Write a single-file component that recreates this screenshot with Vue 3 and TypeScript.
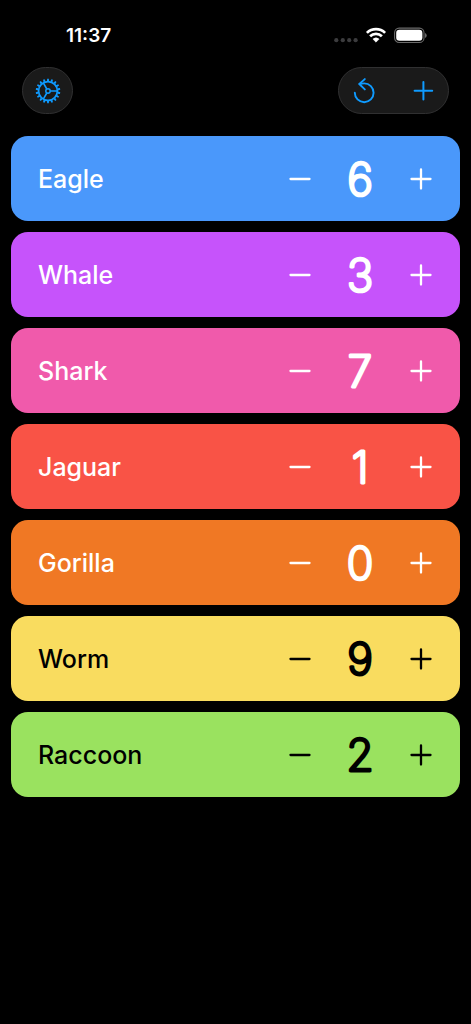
<script setup lang="ts">
import { ref } from 'vue'

interface Player {
  name: string
  score: number
  tone: string
}

const players = ref<Player[]>([
  { name: 'Eagle', score: 6, tone: 'blue' },
  { name: 'Whale', score: 3, tone: 'purple' },
  { name: 'Shark', score: 7, tone: 'pink' },
  { name: 'Jaguar', score: 1, tone: 'red' },
  { name: 'Gorilla', score: 0, tone: 'orange' },
  { name: 'Worm', score: 9, tone: 'yellow' },
  { name: 'Raccoon', score: 2, tone: 'green' },
])

const tones = ['blue', 'purple', 'pink', 'red', 'orange', 'yellow', 'green']
const teeth = Array.from({ length: 18 }, (_, i) => i * 20)

function resetScores() {
  players.value.forEach((p) => (p.score = 0))
}

function addPlayer() {
  const n = players.value.length
  players.value.push({ name: `Player ${n + 1}`, score: 0, tone: tones[n % tones.length] })
}
</script>

<template>
  <div class="screen">
    <div class="status">
      <span class="time">11:37</span>
      <div class="indicators">
        <svg class="dots" width="24" height="16" viewBox="0 0 24 16" aria-hidden="true">
          <circle cx="2.3" cy="12.2" r="2.1" />
          <circle cx="8.8" cy="12.2" r="2.1" />
          <circle cx="15.2" cy="12.2" r="2.1" />
          <circle cx="21.6" cy="12.2" r="2.1" />
        </svg>
        <svg width="20" height="16" viewBox="0 0 20 16" aria-hidden="true">
          <g fill="none" stroke="#fff" stroke-width="2.7">
            <path d="M0.9 4.9A13 13 0 0 1 19.1 4.9" />
            <path d="M4.1 8.3A8.4 8.4 0 0 1 15.9 8.3" />
          </g>
          <path d="M10 14.2L6.9 11.1A4.7 4.7 0 0 1 13.1 11.1Z" fill="#fff" stroke="#fff" stroke-width="0.5" stroke-linejoin="round" />
        </svg>
        <svg width="33" height="16" viewBox="0 0 33 16" aria-hidden="true">
          <rect x="0.6" y="0.1" width="29.4" height="14.4" rx="4.6" fill="none" stroke="#6b6b6b" stroke-width="1.1" />
          <rect x="2.2" y="1.8" width="26.2" height="11" rx="3.2" fill="#fff" />
          <path d="M31.1 4.9Q32.6 5.7 32.6 7.4T31.1 9.9Z" fill="#777" />
        </svg>
      </div>
    </div>

    <header class="toolbar">
      <button class="pill" type="button" aria-label="Settings">
        <svg width="26" height="26" viewBox="-13 -13 26 26" fill="none" stroke="currentColor">
          <circle r="9.4" stroke-width="1.7" />
          <path
            v-for="a in teeth"
            :key="a"
            d="M-1.1 -9.8L-0.8 -12.3H0.8L1.1 -9.8Z"
            :transform="`rotate(${a})`"
            fill="currentColor"
            stroke="none"
          />
          <circle r="2.2" stroke-width="1.5" />
          <path d="M2.4 0H9.4M-1.2 -2L-4.7 -8.1M-1.2 2L-4.7 8.1" stroke-width="1.6" />
        </svg>
      </button>
      <div class="pill group">
        <button type="button" aria-label="Reset scores" @click="resetScores">
          <svg width="26" height="26" viewBox="0 0 26 26" fill="none" stroke="currentColor" stroke-width="1.9" stroke-linecap="round" stroke-linejoin="round">
            <path d="M3.8 14.8A9.4 9.4 0 1 0 13.2 5.4Q11 5.4 8.6 6" />
            <path d="M13.8 1.1L8.3 6L13.8 11.4" />
          </svg>
        </button>
        <button type="button" aria-label="Add player" @click="addPlayer">
          <svg width="26" height="26" viewBox="0 0 26 26" fill="none" stroke="currentColor" stroke-width="2" stroke-linecap="round">
            <path d="M4.6 12.8H22.2M13.4 4V21.6" />
          </svg>
        </button>
      </div>
    </header>

    <main class="list">
      <section v-for="p in players" :key="p.name" class="card" :class="p.tone">
        <h2 class="name">{{ p.name }}</h2>
        <button class="step" type="button" :aria-label="`Decrease ${p.name}`" @click="p.score--">
          <svg width="24" height="24" viewBox="0 0 24 24"><path d="M2.5 12H21.5" /></svg>
        </button>
        <output class="score">
          <svg width="97" height="56" viewBox="0 0 97 56">
            <text x="48" y="44" text-anchor="middle">{{ p.score }}</text>
          </svg>
        </output>
        <button class="step" type="button" :aria-label="`Increase ${p.name}`" @click="p.score++">
          <svg width="24" height="24" viewBox="0 0 24 24"><path d="M2.5 12H21.5M12 2.5V21.5" /></svg>
        </button>
      </section>
    </main>
  </div>
</template>

<style>
body {
  margin: 0;
  background: #000;
}
</style>

<style scoped>
.screen {
  min-height: 100vh;
  box-sizing: border-box;
  background: #000;
  color: #fff;
  font-family: Inter, "Liberation Sans", sans-serif;
}

.status {
  display: flex;
  align-items: center;
  justify-content: space-between;
  height: 67px;
  padding: 4px 44px 0 66px;
  box-sizing: border-box;
}

.time {
  font-size: 19px;
  line-height: 24px;
  font-weight: 600;
}

.indicators {
  display: flex;
  align-items: center;
  gap: 8px;
}

.indicators svg {
  overflow: visible;
}

.dots {
  fill: #3c3c3e;
}

.toolbar {
  display: flex;
  justify-content: space-between;
  padding: 0 22px;
}

button {
  display: flex;
  align-items: center;
  justify-content: center;
  padding: 0;
  border: 0;
  background: none;
  color: inherit;
  cursor: pointer;
}

.pill {
  width: 51px;
  height: 47px;
  box-sizing: border-box;
  border: 1px solid #303031;
  border-radius: 24px;
  background: #1a1a1a;
  color: #0f9bff;
}

.group {
  display: flex;
  align-items: center;
  justify-content: space-between;
  width: 111px;
  padding: 0 12px;
}

.list {
  display: flex;
  flex-direction: column;
  gap: 11px;
  padding: 22px 11px;
}

.card {
  display: flex;
  align-items: center;
  min-height: 85px;
  padding: 0 27px;
  box-sizing: border-box;
  border-radius: 17px;
}

.name {
  flex: 1;
  margin: 0;
  font-size: 25px;
  line-height: 32px;
  font-weight: 500;
}

.step path {
  fill: none;
  stroke: currentColor;
  stroke-width: 2.3;
  stroke-linecap: round;
}

.score svg {
  display: block;
}

.score text {
  font-size: 44px;
  font-weight: 200;
  fill: currentColor;
  stroke: currentColor;
  stroke-width: 3px;
  stroke-linejoin: round;
}

.blue { background: #4a98fb; }
.purple { background: #c653fb; }
.pink { background: #f05aab; }
.red { background: #f95346; }
.orange { background: #f07824; }
.yellow { background: #f9dc5f; color: #000; }
.green { background: #9ae25f; color: #000; }
</style>
